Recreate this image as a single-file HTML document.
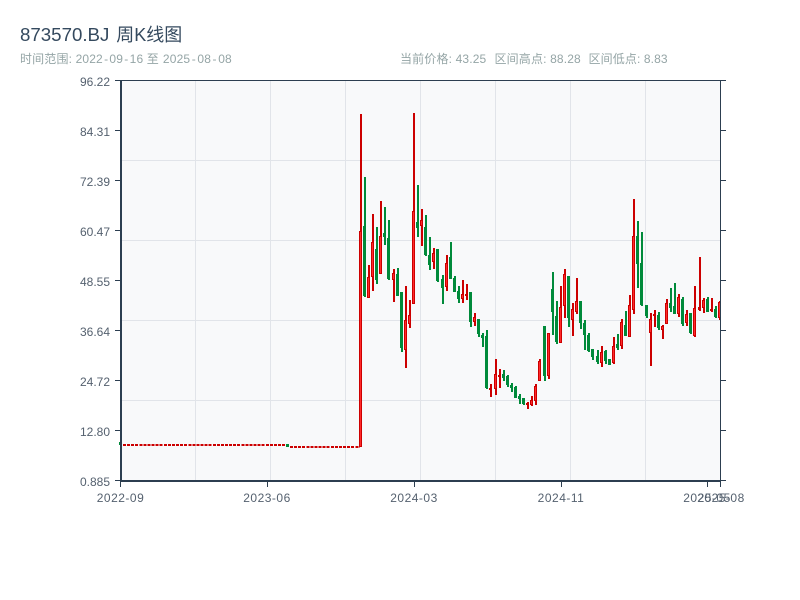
<!DOCTYPE html>
<html><head><meta charset="utf-8"><style>
html,body{margin:0;padding:0;background:#fff;width:800px;height:600px;overflow:hidden}
svg{display:block;position:absolute;left:0;top:0}
text{font-family:"Liberation Sans","Noto Sans CJK SC",sans-serif}
.l{font-size:12px;fill:#55616f;text-anchor:end}
.b{font-size:12px;fill:#55616f;text-anchor:middle;letter-spacing:.5px}
.s{font-size:12px;fill:#95a5a6}
</style></head><body>
<svg width="800" height="600" viewBox="0 0 800 600" xmlns="http://www.w3.org/2000/svg">
<text x="20" y="41" font-size="18.7" fill="#34495e">873570.BJ <tspan x="116.3" font-size="18">周K线图</tspan></text>
<text class="s" x="20" y="63" letter-spacing=".15">时间范围: 2022<tspan dx="1.2">-</tspan><tspan dx="1.2">09</tspan><tspan dx="1.2">-</tspan><tspan dx="1.2">16</tspan> 至 <tspan dx=".5">2025</tspan><tspan dx="1.5">-</tspan><tspan dx="1.5">08</tspan><tspan dx="1.5">-</tspan><tspan dx="1.5">08</tspan></text>
<text class="s" x="400" y="63" letter-spacing=".15">当前价格: 43.25</text>
<text class="s" x="494.5" y="63" letter-spacing=".15">区间高点: 88.28</text>
<text class="s" x="588.5" y="63" letter-spacing=".12">区间低点: 8.83</text>

<rect x="121" y="81" width="600" height="400" fill="#f8f9fa"/>
<g stroke="#e1e4e9" stroke-width="1" shape-rendering="crispEdges">
<path d="M195.5 81V481M270.5 81V481M345.5 81V481M420.5 81V481M495.5 81V481M570.5 81V481M645.5 81V481M121 160.5H721M121 240.5H721M121 320.5H721M121 400.5H721" fill="none"/>
</g>

<g shape-rendering="crispEdges" fill="none">
<path d="M120 442V445" stroke="#008a3a" stroke-width="2"/>
<path d="M123 445H287" stroke="#cc0000" stroke-width="2" stroke-dasharray="3 1.08"/>
<path d="M287.5 444V447" stroke="#008a3a" stroke-width="3"/>
<path d="M290 447H360" stroke="#cc0000" stroke-width="2" stroke-dasharray="3 1.08"/>

<path stroke="#008a3a" stroke-width="2" d="M365 177V297M377 227V284M385 207V245M389 220V280M398 268V296M402 292V352M418 185V237M426 215V256M430 237V270M438 249V282M443 275V304M451 242V279M455 276V292M459 286V303M471 292V327M479 319V337M483 333V347M487 330V389M504 370V381M508 375V387M512 383V392M516 386V398M520 394V404M524 398V405M545 326V381M553 272V335M557 301V344M569 276V327M581 301V329M585 320V350M589 333V352M593 349V360M598 350V364M606 350V364M610 359V365M618 334V350M626 311V336M638 221V288M642 232V306M647 305V318M659 312V330M671 288V312M675 283V314M683 297V326M691 313V334M708 297V312M716 306V318"/>
<path stroke="#008a3a" stroke-width="3" d="M364.5 226V296M376.5 249V280M384.5 233V237M388.5 238V279M397.5 274V296M401.5 292V348M417.5 222V228M425.5 227V255M429.5 255V265M437.5 249V281M442.5 279V288M450.5 257V279M454.5 278V292M458.5 291V299M470.5 292V322M478.5 319V334M482.5 335V338M486.5 336V388M503.5 374V378M507.5 376V385M511.5 385V388M515.5 387V398M519.5 396V399M523.5 398V404M544.5 326V376M552.5 289V312M556.5 316V342M568.5 276V318M580.5 301V323M584.5 323V335M588.5 335V351M592.5 349V357M597.5 356V362M605.5 351V361M609.5 359V365M617.5 344V348M625.5 325V336M637.5 236V264M641.5 263V305M646.5 305V316M658.5 315V328M670.5 303V308M674.5 306V314M682.5 299V324M690.5 313V333M707.5 299V312M715.5 309V317"/>

<path stroke="#cc0000" stroke-width="2" d="M361 114V447M369 265V298M373 214V291M381 201V274M394 269V302M406 286V368M410 300V328M414 113V304M422 209V246M434 248V269M447 255V291M463 280V303M467 284V300M475 313V326M491 384V397M496 359V395M500 369V388M528 402V409M532 396V406M536 384V405M540 359V381M549 333V379M561 286V343M565 269V318M573 303V336M577 278V314M602 346V367M614 337V364M622 319V349M630 295V337M634 199V314M651 313V366M655 310V327M663 325V339M667 299V324M679 294V317M687 310V326M695 286V337M700 257V311M704 298V313M712 298V312M720 301V320"/>
<path stroke="#cc0000" stroke-width="3" d="M360.5 231V447M368.5 277V298M372.5 242V277M380.5 236V274M393.5 273V280M405.5 320V350M409.5 315V324M413.5 211V304M421.5 220V226M433.5 253V262M446.5 263V287M462.5 294V299M466.5 294V296M474.5 317V322M490.5 388V390M495.5 374V389M499.5 375V377M527.5 403V405M531.5 400V405M535.5 386V401M539.5 361V381M548.5 333V376M560.5 307V343M564.5 274V306M572.5 309V320M576.5 301V312M601.5 352V363M613.5 346V363M621.5 322V346M629.5 305V337M633.5 236V310M650.5 319V333M654.5 314V316M662.5 326V330M666.5 303V324M678.5 297V314M686.5 314V323M694.5 308V336M699.5 307V310M703.5 300V308M711.5 309V311M719.5 302V318"/>
<path stroke="#ff2a2a" stroke-width="1" d="M360.5 232V446M368.5 278V297M372.5 243V276M380.5 237V273M393.5 274V279M405.5 321V349M409.5 316V323M413.5 212V303M421.5 221V225M433.5 254V261M446.5 264V286M462.5 295V298M474.5 318V321M495.5 375V388M531.5 401V404M535.5 387V400M539.5 362V380M548.5 334V375M560.5 308V342M564.5 275V305M572.5 310V319M576.5 302V311M601.5 353V362M613.5 347V362M621.5 323V345M629.5 306V336M633.5 237V309M650.5 320V332M662.5 327V329M666.5 304V323M678.5 298V313M686.5 315V322M694.5 309V335M703.5 301V307M719.5 303V317"/>
</g>

<g stroke="#2c3e50" fill="none" shape-rendering="crispEdges">
<path stroke-width="1" d="M115 80.5H726M720.5 81V487M721 130.5H726M721 180.5H726M721 230.5H726M721 280.5H726M721 330.5H726M721 380.5H726M721 430.5H726M721 480.5H726"/>
<path stroke-width="1" d="M115 80.5H120M115 130.5H120M115 180.5H120M115 230.5H120M115 280.5H120M115 330.5H120M115 380.5H120M115 430.5H120M115 480.5H120M120.5 482V487M267.5 482V487M414.5 482V487M561.5 482V487M707.5 482V487"/>
<path stroke-width="2" d="M121 80V482M120 481H721"/>
</g>

<text class="l" x="110" y="86">96.22</text>
<text class="l" x="110" y="136">84.31</text>
<text class="l" x="110" y="186">72.39</text>
<text class="l" x="110" y="236">60.47</text>
<text class="l" x="110" y="286">48.55</text>
<text class="l" x="110" y="336">36.64</text>
<text class="l" x="110" y="386">24.72</text>
<text class="l" x="110" y="436">12.80</text>
<text class="l" x="110" y="486">0.885</text>

<text class="b" x="120.5" y="502">2022-09</text>
<text class="b" x="267" y="502">2023-06</text>
<text class="b" x="414" y="502">2024-03</text>
<text class="b" x="561" y="502">2024-11</text>
<text class="b" x="707" y="502">2025-05</text>
<text class="b" x="721" y="502">2025-08</text>
</svg>
</body></html>
